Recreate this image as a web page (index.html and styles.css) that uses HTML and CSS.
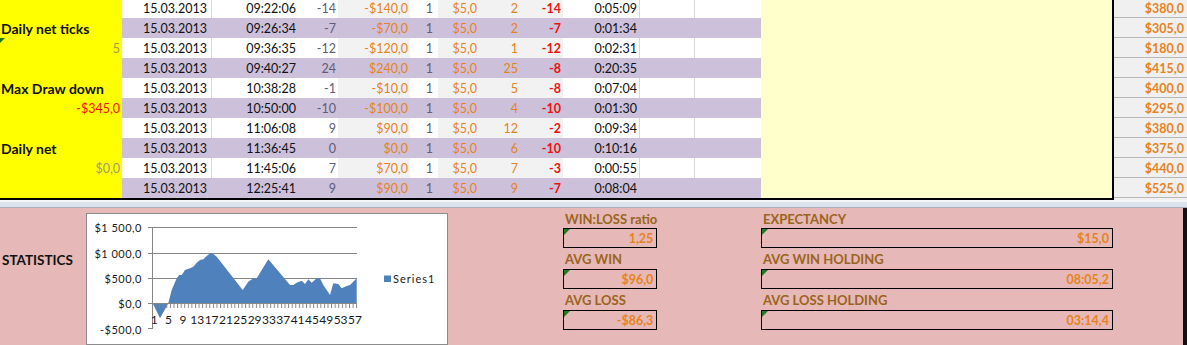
FILE: index.html
```html
<!DOCTYPE html>
<html>
<head>
<meta charset="utf-8">
<link rel="stylesheet" href="styles.css">
</head>
<body>
<div class="sheet">
  <div class="top">
    <div class="main">
      <div class="row">
        <div class="c a"></div><div class="c d b">15.03.2013</div><div class="c d t">09:22:06</div><div class="c d k">-14</div><div class="c d g p">-$140,0</div><div class="c d q">1</div><div class="c d g p fee">$5,0</div><div class="c d g p n">2</div><div class="c d g r">-14</div><div class="c d du">0:05:09</div><div class="c d e1"></div><div class="c d e2"></div><div class="c m"></div>
      </div>
      <div class="row alt">
        <div class="c a lbl">Daily net ticks</div><div class="c d b">15.03.2013</div><div class="c d t">09:26:34</div><div class="c d k">-7</div><div class="c d g p">-$70,0</div><div class="c d q">1</div><div class="c d g p fee">$5,0</div><div class="c d g p n">2</div><div class="c d g r">-7</div><div class="c d du">0:01:34</div><div class="c d e1"></div><div class="c d e2"></div><div class="c m"></div>
      </div>
      <div class="row">
        <div class="c a flag val olive">5</div><div class="c d b">15.03.2013</div><div class="c d t">09:36:35</div><div class="c d k">-12</div><div class="c d g p">-$120,0</div><div class="c d q">1</div><div class="c d g p fee">$5,0</div><div class="c d g p n">1</div><div class="c d g r">-12</div><div class="c d du">0:02:31</div><div class="c d e1"></div><div class="c d e2"></div><div class="c m"></div>
      </div>
      <div class="row alt">
        <div class="c a"></div><div class="c d b">15.03.2013</div><div class="c d t">09:40:27</div><div class="c d k">24</div><div class="c d g p">$240,0</div><div class="c d q">1</div><div class="c d g p fee">$5,0</div><div class="c d g p n">25</div><div class="c d g r">-8</div><div class="c d du">0:20:35</div><div class="c d e1"></div><div class="c d e2"></div><div class="c m"></div>
      </div>
      <div class="row">
        <div class="c a lbl">Max Draw down</div><div class="c d b">15.03.2013</div><div class="c d t">10:38:28</div><div class="c d k">-1</div><div class="c d g p">-$10,0</div><div class="c d q">1</div><div class="c d g p fee">$5,0</div><div class="c d g p n">5</div><div class="c d g r">-8</div><div class="c d du">0:07:04</div><div class="c d e1"></div><div class="c d e2"></div><div class="c m"></div>
      </div>
      <div class="row alt">
        <div class="c a val red">-$345,0</div><div class="c d b">15.03.2013</div><div class="c d t">10:50:00</div><div class="c d k">-10</div><div class="c d g p">-$100,0</div><div class="c d q">1</div><div class="c d g p fee">$5,0</div><div class="c d g p n">4</div><div class="c d g r">-10</div><div class="c d du">0:01:30</div><div class="c d e1"></div><div class="c d e2"></div><div class="c m"></div>
      </div>
      <div class="row">
        <div class="c a"></div><div class="c d b">15.03.2013</div><div class="c d t">11:06:08</div><div class="c d k">9</div><div class="c d g p">$90,0</div><div class="c d q">1</div><div class="c d g p fee">$5,0</div><div class="c d g p n">12</div><div class="c d g r">-2</div><div class="c d du">0:09:34</div><div class="c d e1"></div><div class="c d e2"></div><div class="c m"></div>
      </div>
      <div class="row alt">
        <div class="c a lbl">Daily net</div><div class="c d b">15.03.2013</div><div class="c d t">11:36:45</div><div class="c d k">0</div><div class="c d g p">$0,0</div><div class="c d q">1</div><div class="c d g p fee">$5,0</div><div class="c d g p n">6</div><div class="c d g r">-10</div><div class="c d du">0:10:16</div><div class="c d e1"></div><div class="c d e2"></div><div class="c m"></div>
      </div>
      <div class="row">
        <div class="c a val grey">$0,0</div><div class="c d b">15.03.2013</div><div class="c d t">11:45:06</div><div class="c d k">7</div><div class="c d g p">$70,0</div><div class="c d q">1</div><div class="c d g p fee">$5,0</div><div class="c d g p n">7</div><div class="c d g r">-3</div><div class="c d du">0:00:55</div><div class="c d e1"></div><div class="c d e2"></div><div class="c m"></div>
      </div>
      <div class="row alt">
        <div class="c a"></div><div class="c d b">15.03.2013</div><div class="c d t">12:25:41</div><div class="c d k">9</div><div class="c d g p">$90,0</div><div class="c d q">1</div><div class="c d g p fee">$5,0</div><div class="c d g p n">9</div><div class="c d g r">-7</div><div class="c d du">0:08:04</div><div class="c d e1"></div><div class="c d e2"></div><div class="c m"></div>
      </div>
    </div>
    <div class="side">
      <div class="sc">$380,0</div>
      <div class="sc">$305,0</div>
      <div class="sc">$180,0</div>
      <div class="sc">$415,0</div>
      <div class="sc">$400,0</div>
      <div class="sc">$295,0</div>
      <div class="sc">$380,0</div>
      <div class="sc">$375,0</div>
      <div class="sc">$440,0</div>
      <div class="sc">$525,0</div>
    </div>
  </div>
  <div class="split"></div>
  <div class="bottom">
    <div class="stat-title">STATISTICS</div>
    <div class="chart">
      <svg width="360" height="130" viewBox="0 0 360 130" xmlns="http://www.w3.org/2000/svg">
        <defs>
          <pattern id="ticks" patternUnits="userSpaceOnUse" x="152" y="303" width="3.582" height="6">
            <rect x="0" y="0" width="1" height="6" fill="#868686"/>
          </pattern>
        </defs>
        <g transform="translate(-87,-214)">
          <g stroke="#868686" stroke-width="1" fill="none">
            <path d="M152 227.5H357M152 253.5H357M152 278.5H357"/>
            <path d="M152.5 227V329M148 227.5H152M148 253.5H152M148 278.5H152M148 303.5H152M148 328.5H152"/>
          </g>
          <polygon fill="#4f81bd" points="152.7,303.3 160,318.3 168.3,303.3 171.7,290 176.7,278.3 179.3,275 181.7,275 185,270 190,268.3 193.3,266.7 196.7,262.7 200,260 203.3,259.3 206.7,256 210,253.3 213.3,254 216.7,256.7 242.7,290 248.3,281.7 253.3,278.3 256.7,278.3 268.3,259.3 290,285 293.3,285 296.7,282.7 301.7,280.7 305,284 308.3,279.3 311.7,282.7 316.7,278.3 320,278.3 323.3,285 330,295 333.3,283.3 338.3,284 341.7,288.3 346.7,286 350,285 356.7,278.3 356.7,303.3"/>
          <rect x="152" y="303" width="205.5" height="5" fill="url(#ticks)"/>
          <path d="M152 303.5H357" stroke="#868686" stroke-width="1"/>
          <g class="ylab" text-anchor="end">
            <text x="142" y="231.5">$1 500,0</text>
            <text x="142" y="257.5">$1 000,0</text>
            <text x="142" y="283">$500,0</text>
            <text x="142" y="307.5">$0,0</text>
            <text x="142" y="333.5">-$500,0</text>
          </g>
          <g class="xlab" text-anchor="middle">
            <text x="154.3" y="323.5">1</text>
            <text x="168.6" y="323.5">5</text>
            <text x="182.9" y="323.5">9</text>
            <text x="197.3" y="323.5">13</text>
            <text x="211.6" y="323.5">17</text>
            <text x="225.9" y="323.5">21</text>
            <text x="240.3" y="323.5">25</text>
            <text x="254.6" y="323.5">29</text>
            <text x="268.9" y="323.5">33</text>
            <text x="283.2" y="323.5">37</text>
            <text x="297.6" y="323.5">41</text>
            <text x="311.9" y="323.5">45</text>
            <text x="326.2" y="323.5">49</text>
            <text x="340.6" y="323.5">53</text>
            <text x="354.9" y="323.5">57</text>
          </g>
          <rect x="384" y="275.5" width="7" height="6.5" fill="#4f81bd"/>
          <text class="legend" x="393" y="283">Series1</text>
        </g>
      </svg>
    </div>
    <div class="kpis kl">
      <div class="kl-lbl">WIN:LOSS ratio</div>
      <div class="kbox">1,25</div>
      <div class="kl-lbl">AVG WIN</div>
      <div class="kbox">$96,0</div>
      <div class="kl-lbl">AVG LOSS</div>
      <div class="kbox">-$86,3</div>
    </div>
    <div class="kpis kr">
      <div class="kl-lbl">EXPECTANCY</div>
      <div class="kbox">$15,0</div>
      <div class="kl-lbl">AVG WIN HOLDING</div>
      <div class="kbox">08:05,2</div>
      <div class="kl-lbl">AVG LOSS HOLDING</div>
      <div class="kbox">03:14,4</div>
    </div>
  </div>
</div>
</body>
</html>
```
FILE: styles.css
```css
html, body {
  margin: 0;
  padding: 0;
  background: #ffffff;
}
body {
  font-family: Lato, "Liberation Sans", sans-serif;
  font-size: 12.5px;
  color: #111111;
  overflow: hidden;
  width: 1187px;
  height: 345px;
}
.sheet {
  width: 1187px;
}
.top {
  display: flex;
  margin-top: -2px;
}
.main {
  width: 1112px;
  border-right: 2px solid #000;
  border-bottom: 2px solid #000;
}
.row {
  display: grid;
  grid-template-columns: 122px 90px 88px 38px 72px 28px 42px 41px 42px 77px 55px 66px 351px;
  height: 20px;
}
.c {
  box-sizing: border-box;
  height: 20px;
  padding-top: 1px;
  line-height: 20px;
  white-space: nowrap;
  text-align: right;
  background: #ffffff;
}
.a {
  background: #ffff00;
  padding-right: 2px;
  position: relative;
}
.m {
  background: #ffffcc;
}
.row.alt .d {
  background: #ccc0da;
  border-color: transparent;
}
.g {
  background: #f2f2f2;
}
.b {
  padding-right: 4px;
  border-right: 1px solid #d9d9d9;
}
.t { padding-right: 4px; }
.k { padding-right: 2px; color: #5d5d78; }
.p { padding-right: 2px; color: #e5831f; }
.q { padding-right: 5px; color: #5d5d78; }
.fee { padding-right: 3px; }
.n { padding-right: 3px; }
.r { padding-right: 2px; color: #ee1111; font-weight: 700; }
.du { padding-right: 2px; border-right: 1px solid #d9d9d9; }
.e1 { border-right: 1px solid #d9d9d9; }

.lbl {
  text-align: left;
  padding-left: 1px;
  font-weight: 700;
  font-size: 14px;
  color: #111;
}
.val { font-size: 12.5px; }
.olive { color: #a0a03a; }
.red { color: #ee1111; }
.grey { color: #9e9e6a; }
.flag::before {
  content: "";
  position: absolute;
  left: 0;
  top: 0;
  width: 0;
  height: 0;
  border-top: 5px solid #217a21;
  border-right: 5px solid transparent;
}

.side {
  width: 73px;
  background: #f0f0f0;
}
.sc {
  box-sizing: border-box;
  height: 20px;
  border-bottom: 1px solid #b8b8b8;
  text-align: right;
  padding-right: 3px;
  padding-top: 1px;
  line-height: 19px;
  color: #e5831f;
  font-weight: 700;
}

.split {
  box-sizing: border-box;
  height: 8px;
  background: #dce2ec;
  border-top: 2px solid #f3f5f9;
  border-bottom: 1px solid #aab1bc;
}

.bottom {
  box-sizing: border-box;
  width: 1187px;
  height: 137px;
  background: #e6b8b7;
  border-right: 4px solid #111;
  display: grid;
  grid-template-columns: 86px 362px 115px 78px 120px 352px 1fr;
  align-items: start;
}
.stat-title {
  grid-column: 1;
  padding-top: 42px;
  padding-left: 2px;
  line-height: 20px;
  font-weight: 700;
  font-size: 13.5px;
  color: #111;
}
.chart {
  grid-column: 2;
  margin-top: 5px;
  box-sizing: border-box;
  height: 132px;
  background: #ffffff;
  border: 1px solid #8c8c8c;
}
.chart svg {
  display: block;
}
.ylab text {
  font-family: Lato, "Liberation Sans", sans-serif;
  font-size: 11px;
  letter-spacing: 0.5px;
  fill: #1a1a1a;
}
.xlab text {
  font-family: Lato, "Liberation Sans", sans-serif;
  font-size: 12px;
  fill: #1a1a1a;
}
.legend {
  font-family: Lato, "Liberation Sans", sans-serif;
  font-size: 11px;
  letter-spacing: 1px;
  fill: #1a1a1a;
}
.kpis {
  display: grid;
  grid-template-rows: 20px 20px 21px 20px 21px 20px;
}
.kl { grid-column: 4; }
.kr { grid-column: 6; }
.kl-lbl {
  padding-left: 2px;
  padding-top: 1px;
  line-height: 20px;
  font-weight: 700;
  font-size: 13px;
  color: #9a6420;
  white-space: nowrap;
  align-self: start;
}
.kbox {
  position: relative;
  box-sizing: border-box;
  height: 20px;
  border: 1px solid #000;
  text-align: right;
  padding-right: 3px;
  line-height: 20px;
  font-weight: 700;
  color: #e5831f;
}
.kbox::before {
  content: "";
  position: absolute;
  left: 0;
  top: 0;
  width: 0;
  height: 0;
  border-top: 6px solid #217a21;
  border-right: 6px solid transparent;
}
```
